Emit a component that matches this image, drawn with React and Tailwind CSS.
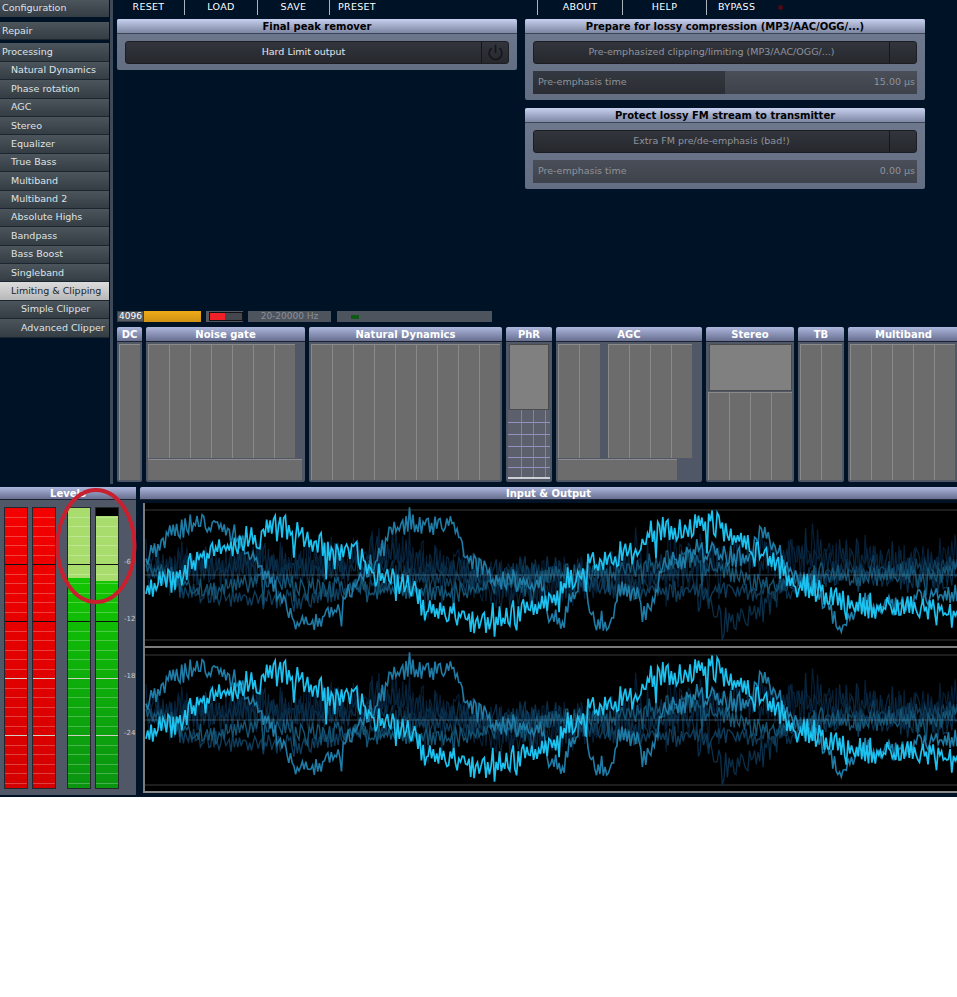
import React from "react";
import { Power } from "lucide-react";

const menu = [
  { label: "Natural Dynamics", pad: "pl-[11px]" },
  { label: "Phase rotation", pad: "pl-[11px]" },
  { label: "AGC", pad: "pl-[11px]" },
  { label: "Stereo", pad: "pl-[11px]" },
  { label: "Equalizer", pad: "pl-[11px]" },
  { label: "True Bass", pad: "pl-[11px]" },
  { label: "Multiband", pad: "pl-[11px]" },
  { label: "Multiband 2", pad: "pl-[11px]" },
  { label: "Absolute Highs", pad: "pl-[11px]" },
  { label: "Bandpass", pad: "pl-[11px]" },
  { label: "Bass Boost", pad: "pl-[11px]" },
  { label: "Singleband", pad: "pl-[11px]" },
  { label: "Limiting & Clipping", pad: "pl-[11px]", active: true },
  { label: "Simple Clipper", pad: "pl-[21px]" },
  { label: "Advanced Clipper", pad: "pl-[21px]" },
];

const MenuRow = ({ label, pad = "pl-[2px]", active, className = "" }) => (
  <div
    className={`h-[18.4px] flex items-center border-b border-[#1c2630] text-[9.5px] whitespace-nowrap ${pad} ${className} ${
      active
        ? "bg-gradient-to-b from-[#dcdcdc] to-[#b8b8b8] text-[#20262c]"
        : "bg-gradient-to-b from-[#4c555c] to-[#343c44] text-[#dfe3e6]"
    }`}
  >
    {label}
  </div>
);

const Sidebar = () => (
  <div className="w-[110px] shrink-0 border-r border-[#0a0f16]">
    <div className="h-[17px] flex items-center pl-[2px] text-[9.5px] text-[#dfe3e6] bg-gradient-to-b from-[#4c555c] to-[#343c44]">Configuration</div>
    <MenuRow label="Repair" className="mt-[5px]" />
    <MenuRow label="Processing" className="mt-[3px]" />
    {menu.map((m) => (
      <MenuRow key={m.label} {...m} />
    ))}
  </div>
);

const TopBar = () => (
  <div className="h-[19px] flex text-[9.5px] text-white tracking-[0.3px]">
    <div className="w-[72px] h-[15px] border-r border-[#aab2bc] flex items-center justify-center">RESET</div>
    <div className="w-[73px] h-[15px] border-r border-[#aab2bc] flex items-center justify-center">LOAD</div>
    <div className="w-[72px] h-[15px] border-r border-[#aab2bc] flex items-center justify-center">SAVE</div>
    <div className="w-[208px] h-[15px] border-r border-[#aab2bc] flex items-center pl-[8px]">PRESET</div>
    <div className="w-[85px] h-[15px] border-r border-[#aab2bc] flex items-center justify-center">ABOUT</div>
    <div className="w-[84px] h-[15px] border-r border-[#aab2bc] flex items-center justify-center">HELP</div>
    <div className="h-[15px] flex items-center pl-[11px]">
      BYPASS
      <span className="ml-[23px] w-[5px] h-[5px] rounded-full bg-[#4a0c14]" />
    </div>
  </div>
);

const Panel = ({ title, children }) => (
  <div className="rounded-[2px] bg-gradient-to-b from-[#6f7a90] to-[#646e82] pb-[6px]">
    <div className="h-[15px] rounded-t-[2px] border-b border-[#3c4456] bg-gradient-to-b from-[#c8d2f0] to-[#7d86a2] flex items-center justify-center text-[10px] font-bold text-black whitespace-nowrap">
      {title}
    </div>
    <div className="px-[8px] pt-[7px] flex flex-col gap-[7px]">{children}</div>
  </div>
);

const Dropdown = ({ label, light, power }) => (
  <div className="h-[23px] flex rounded-[3px] border border-[#1c1e24] bg-gradient-to-b from-[#33353d] to-[#26282e]">
    <div className={`flex-1 flex items-center justify-center text-[9.5px] ${light ? "text-[#e4e6ea]" : "text-[#8f949c]"}`}>{label}</div>
    <div className="w-[27px] border-l border-[#14161a] flex items-center justify-center">
      {power && <Power size={17} strokeWidth={2.4} className="text-[#15171b]" />}
    </div>
  </div>
);

const Slider = ({ label, value, fill }) => (
  <div className="relative h-[23px] bg-gradient-to-b from-[#4a4e58] to-[#3e424a] flex items-center justify-between pl-[5px] pr-[2px] text-[9.5px] text-[#8e939b]">
    {fill && <div className={`absolute left-0 top-0 bottom-0 ${fill} bg-gradient-to-b from-[#343840] to-[#2a2d33]`} />}
    <span className="relative">{label}</span>
    <span className="relative">{value}</span>
  </div>
);

const StatusRow = () => (
  <div className="h-[11px] flex">
    <div className="w-[27px] bg-[#585c64] border border-[#3a3e46] text-[9px] leading-[9px] text-white pl-[1px]">4096</div>
    <div className="w-[57px] bg-gradient-to-b from-[#eeaa18] to-[#cf9212]" />
    <div className="w-[37px] ml-[5px] bg-[#555962] pl-[3px] py-[1px]">
      <div className="h-full border border-[#101216] bg-[#44484e]">
        <div className="w-[15px] h-full bg-[#ee2028]" />
      </div>
    </div>
    <div className="w-[83px] ml-[5px] bg-[#4e545e] text-[9px] leading-[11px] text-[#8a9098] text-center">20-20000 Hz</div>
    <div className="w-[155px] ml-[6px] bg-[#4e545e] flex items-center pl-[14px]">
      <div className="w-[8px] h-[4px] bg-[#0e5a14]" />
    </div>
  </div>
);

// a run of gray module cells, each one with a light left edge
const Cols = ({ n, className = "" }) => (
  <div className={`flex ${className}`}>
    {Array.from({ length: n }).map((_, i) => (
      <div key={i} className="w-[21px] bg-[#6c6c6c] border-l border-t border-[#8a8a8a]" />
    ))}
  </div>
);

const Module = ({ title, width, children }) => (
  <div className={`${width} shrink-0 flex flex-col`}>
    <div className="h-[15px] rounded-t-[2px] border-b border-[#1c2230] bg-gradient-to-b from-[#aeb8de] to-[#686f90] flex items-center justify-center text-[10px] font-bold text-white whitespace-nowrap">
      {title}
    </div>
    <div className="flex-1 min-h-0 bg-[#505868] rounded-b-[2px] p-[2px] flex flex-col">{children}</div>
  </div>
);

const GridBox = () => (
  <svg viewBox="0 0 42 69" className="w-[42px] h-[69px] bg-[#5c606c]">
    {[12, 24, 36, 47, 57].map((y) => (
      <line key={y} x1="0" x2="42" y1={y + 0.5} y2={y + 0.5} stroke="#a09ed8" strokeWidth="0.8" />
    ))}
    {[13, 25, 37].map((x) => (
      <line key={x} y1="0" y2="69" x1={x + 0.5} x2={x + 0.5} stroke="#8c8f9c" strokeWidth="0.8" />
    ))}
    <line x1="0" x2="42" y1="68" y2="68" stroke="#f4f4f4" strokeWidth="1.5" />
  </svg>
);

const Modules = () => (
  <div className="h-[155px] flex gap-[4px]">
    <Module title="DC" width="w-[25px]">
      <Cols n={1} className="flex-1" />
    </Module>
    <Module title="Noise gate" width="w-[159px]">
      <Cols n={7} className="flex-1" />
      <div className="h-[21px] mt-[1px] bg-[#6c6c6c] border-t border-[#8a8a8a] w-[154px]" />
    </Module>
    <Module title="Natural Dynamics" width="w-[193px]">
      <Cols n={9} className="flex-1" />
    </Module>
    <Module title="PhR" width="w-[46px]">
      <div className="h-[66px] mx-[1px] bg-[#808080] border border-[#4a4a4a]" />
      <GridBox />
    </Module>
    <Module title="AGC" width="w-[146px]">
      <div className="flex-1 flex gap-[8px] min-h-0">
        <Cols n={2} />
        <Cols n={4} />
      </div>
      <div className="h-[21px] mt-[1px] bg-[#6c6c6c] border-t border-[#8a8a8a] w-[119px]" />
    </Module>
    <Module title="Stereo" width="w-[88px]">
      <div className="h-[47px] ml-[1px] bg-[#808080] border border-[#4a4a4a]" />
      <Cols n={4} className="flex-1 mt-[1px]" />
    </Module>
    <Module title="TB" width="w-[46px]">
      <Cols n={2} className="flex-1" />
    </Module>
    <Module title="Multiband" width="w-[111px]">
      <Cols n={5} className="flex-1" />
    </Module>
  </div>
);

const Meter = ({ color, top = 0, light }) => (
  <div className="relative w-[24px] h-[282px] flex flex-col border border-[#24282e] overflow-hidden">
    {top > 0 && <div className="bg-black shrink-0" style={{ height: top }} />}
    {light > 0 && <div className="bg-[#a8dc6c] shrink-0" style={{ height: light }} />}
    <div className={`flex-1 ${color === "red" ? "bg-gradient-to-b from-[#f40000] to-[#d40000]" : "bg-gradient-to-b from-[#12c600] to-[#0a9410]"}`} />
    <div className="absolute inset-0 flex flex-col">
      {Array.from({ length: 30 }).map((_, i) => {
        const major = (i + 1) % 6 === 0;
        const dark = i === 5 || i === 11;
        return (
          <div
            key={i}
            className={`h-[9.5px] shrink-0 border-b ${
              major ? (dark ? "border-[#101010]" : "border-[#d0d0c0]") : "border-white/25"
            }`}
          />
        );
      })}
    </div>
  </div>
);

const Levels = () => (
  <div className="relative w-[136px] shrink-0 flex flex-col rounded-tr-[2px] bg-[#505868]">
    <div className="h-[13px] border-b border-[#1c2230] bg-gradient-to-b from-[#aeb8de] to-[#686f90] flex items-center justify-center text-[10px] font-bold text-white">
      Levels
    </div>
    <div className="flex pl-[4px] pt-[7px]">
      <Meter color="red" />
      <div className="w-[4px]" />
      <Meter color="red" />
      <div className="w-[11px]" />
      <Meter color="green" light={70} />
      <div className="w-[4px]" />
      <Meter color="green" top={8} light={65} />
      <div className="pl-[5px] flex flex-col text-[7px] leading-[8px] text-[#c8ccd4]">
        {["-6", "-12", "-18", "-24"].map((t, i) => (
          <div key={t} className={`flex items-end ${i === 0 ? "h-[59px]" : "h-[57px]"}`}>
            {t}
          </div>
        ))}
      </div>
    </div>
    <svg className="absolute left-[55px] top-0 w-[82px] h-[118px] overflow-visible" viewBox="0 0 82 118">
      <ellipse cx="41" cy="59" rx="38.5" ry="56" fill="none" stroke="#c8202e" strokeWidth="4" />
    </svg>
  </div>
);

const rng = (seed) => () => {
  seed = (seed + 0x6d2b79f5) | 0;
  let t = Math.imul(seed ^ (seed >>> 15), 1 | seed);
  t = (t + Math.imul(t ^ (t >>> 7), 61 | t)) ^ t;
  return ((t ^ (t >>> 14)) >>> 0) / 4294967296;
};

// jagged line through hand-read points, coordinates are page px of the top channel
const tracePath = (pts, seed, amp) => {
  const r = rng(seed);
  let d = "";
  let k = 0;
  let slow = 0;
  let sign = 1;
  for (let x = 144; x <= 958; x += 1.7) {
    while (k < pts.length - 2 && pts[k + 1][0] < x) k++;
    const [x0, y0] = pts[k];
    const [x1, y1] = pts[k + 1];
    const t = Math.min(1, Math.max(0, (x - x0) / (x1 - x0)));
    slow = slow * 0.7 + (r() - 0.5) * amp * 0.22;
    sign = r() < 0.75 ? -sign : sign;
    const spike = r() < 0.07 ? (r() - 0.35) * amp * 1.3 : 0;
    const y = y0 + (y1 - y0) * t + slow + (sign * r() * amp) / 2 + spike;
    d += `${d ? "L" : "M"}${(x - 143).toFixed(1)} ${(y - 503).toFixed(1)}`;
  }
  return d;
};

const bright = [[144,595],[173,580],[207,552],[247,540],[277,524],[307,536],[327,552],[357,558],[380,575],[407,585],[423,608],[457,618],[487,622],[513,615],[540,603],[560,588],[583,565],[607,558],[637,555],[650,530],[673,532],[707,522],[727,535],[753,552],[773,558],[793,582],[823,592],[843,602],[857,604],[903,608],[940,612],[958,612]];
const mid = [[144,562],[170,530],[217,520],[240,540],[257,565],[277,592],[290,620],[313,624],[337,608],[353,585],[377,555],[393,525],[453,525],[467,558],[490,575],[540,585],[547,616],[560,620],[580,572],[590,618],[608,624],[617,590],[637,595],[640,622],[650,605],[660,568],[687,555],[707,548],[745,560],[762,530],[773,545],[790,575],[823,598],[830,616],[837,630],[847,618],[860,598],[873,610],[907,600],[958,592]];
const dark1 = [[144,570],[200,590],[260,578],[320,590],[380,590],[440,592],[500,585],[560,575],[620,570],[680,560],[720,570],[760,585],[820,575],[860,578],[958,572]];
const dark2 = [[144,562],[180,590],[240,600],[300,600],[400,580],[470,580],[540,575],[620,590],[680,590],[720,590],[780,590],[840,570],[880,570],[958,562]];
const dark3 = [[144,565],[300,565],[400,552],[500,590],[600,575],[700,560],[800,555],[900,565],[958,565]];
const dark4 = [[540,570],[620,590],[680,570],[710,605],[735,625],[770,600],[830,570],[958,580]];

const Channel = ({ seed }) => (
  <svg viewBox="0 0 814 143" className="w-[814px] h-[143px] bg-black block">
    <line x1="0" x2="814" y1="7" y2="7" stroke="#3a3a3a" />
    <line x1="0" x2="814" y1="137" y2="137" stroke="#3a3a3a" />
    <path d={tracePath(dark3, seed + 1, 50)} fill="none" stroke="#061e36" strokeWidth="1.2" />
    <path d={tracePath(dark3, seed + 7, 34)} fill="none" stroke="#08263f" strokeWidth="1.2" />
    <path d={tracePath(dark4, seed + 2, 26)} fill="none" stroke="#0a2f4a" strokeWidth="1.3" />
    <path d={tracePath(dark2, seed + 3, 20)} fill="none" stroke="#0e3c5a" strokeWidth="1.4" />
    <path d={tracePath(dark1, seed + 4, 20)} fill="none" stroke="#145474" strokeWidth="1.4" />
    <path d={tracePath(mid, seed + 5, 20)} fill="none" stroke="#1f7ca6" strokeWidth="1.6" />
    <path d={tracePath(bright, seed + 6, 26)} fill="none" stroke="#1cc2f0" strokeWidth="1.7" />
    <line x1="0" x2="814" y1="72" y2="72" stroke="#6a8ca4" strokeOpacity="0.5" />
  </svg>
);

const Waves = () => (
  <div className="flex-1 min-w-0 flex flex-col overflow-hidden rounded-tl-[2px]">
    <div className="h-[13px] border-b border-[#1c2230] bg-gradient-to-b from-[#aeb8de] to-[#686f90] flex items-center justify-center text-[10px] font-bold text-white">
      Input & Output
    </div>
    <div className="ml-[3px] mt-[3px] border-l-2 border-[#7c7c7c] bg-[#7c7c7c]">
      <Channel seed={11} />
      <div className="h-[2px]" />
      <Channel seed={11} />
    </div>
    <div className="h-[2px] bg-[#8a8a8a] ml-[3px]" />
  </div>
);

export default function App() {
  return (
    <div className="w-[957px] h-[997px] bg-white overflow-hidden font-['DejaVu_Sans',sans-serif]">
      <div className="h-[797px] bg-[#001226] flex flex-col">
        <div className="h-[484px] flex">
          <Sidebar />
          <div className="w-[3px] shrink-0 bg-[#3e4a5a]" />
          <div className="flex-1 min-w-0 pl-[4px] overflow-hidden">
            <div className="-ml-[4px]">
              <TopBar />
            </div>
            <div className="h-[292px] flex gap-[8px]">
              <div className="w-[400px]">
                <Panel title="Final peak remover">
                  <Dropdown label="Hard Limit output" light power />
                </Panel>
              </div>
              <div className="w-[400px] flex flex-col gap-[8px]">
                <Panel title="Prepare for lossy compression (MP3/AAC/OGG/...)">
                  <Dropdown label="Pre-emphasized clipping/limiting (MP3/AAC/OGG/...)" />
                  <Slider label="Pre-emphasis time" value="15.00 µs" fill="w-[192px]" />
                </Panel>
                <Panel title="Protect lossy FM stream to transmitter">
                  <Dropdown label="Extra FM pre/de-emphasis (bad!)" />
                  <Slider label="Pre-emphasis time" value="0.00 µs" />
                </Panel>
              </div>
            </div>
            <StatusRow />
            <div className="h-[5px]" />
            <Modules />
          </div>
        </div>
        <div className="h-[308px] mt-[3px] flex gap-[4px]">
          <Levels />
          <Waves />
        </div>
      </div>
    </div>
  );
}
